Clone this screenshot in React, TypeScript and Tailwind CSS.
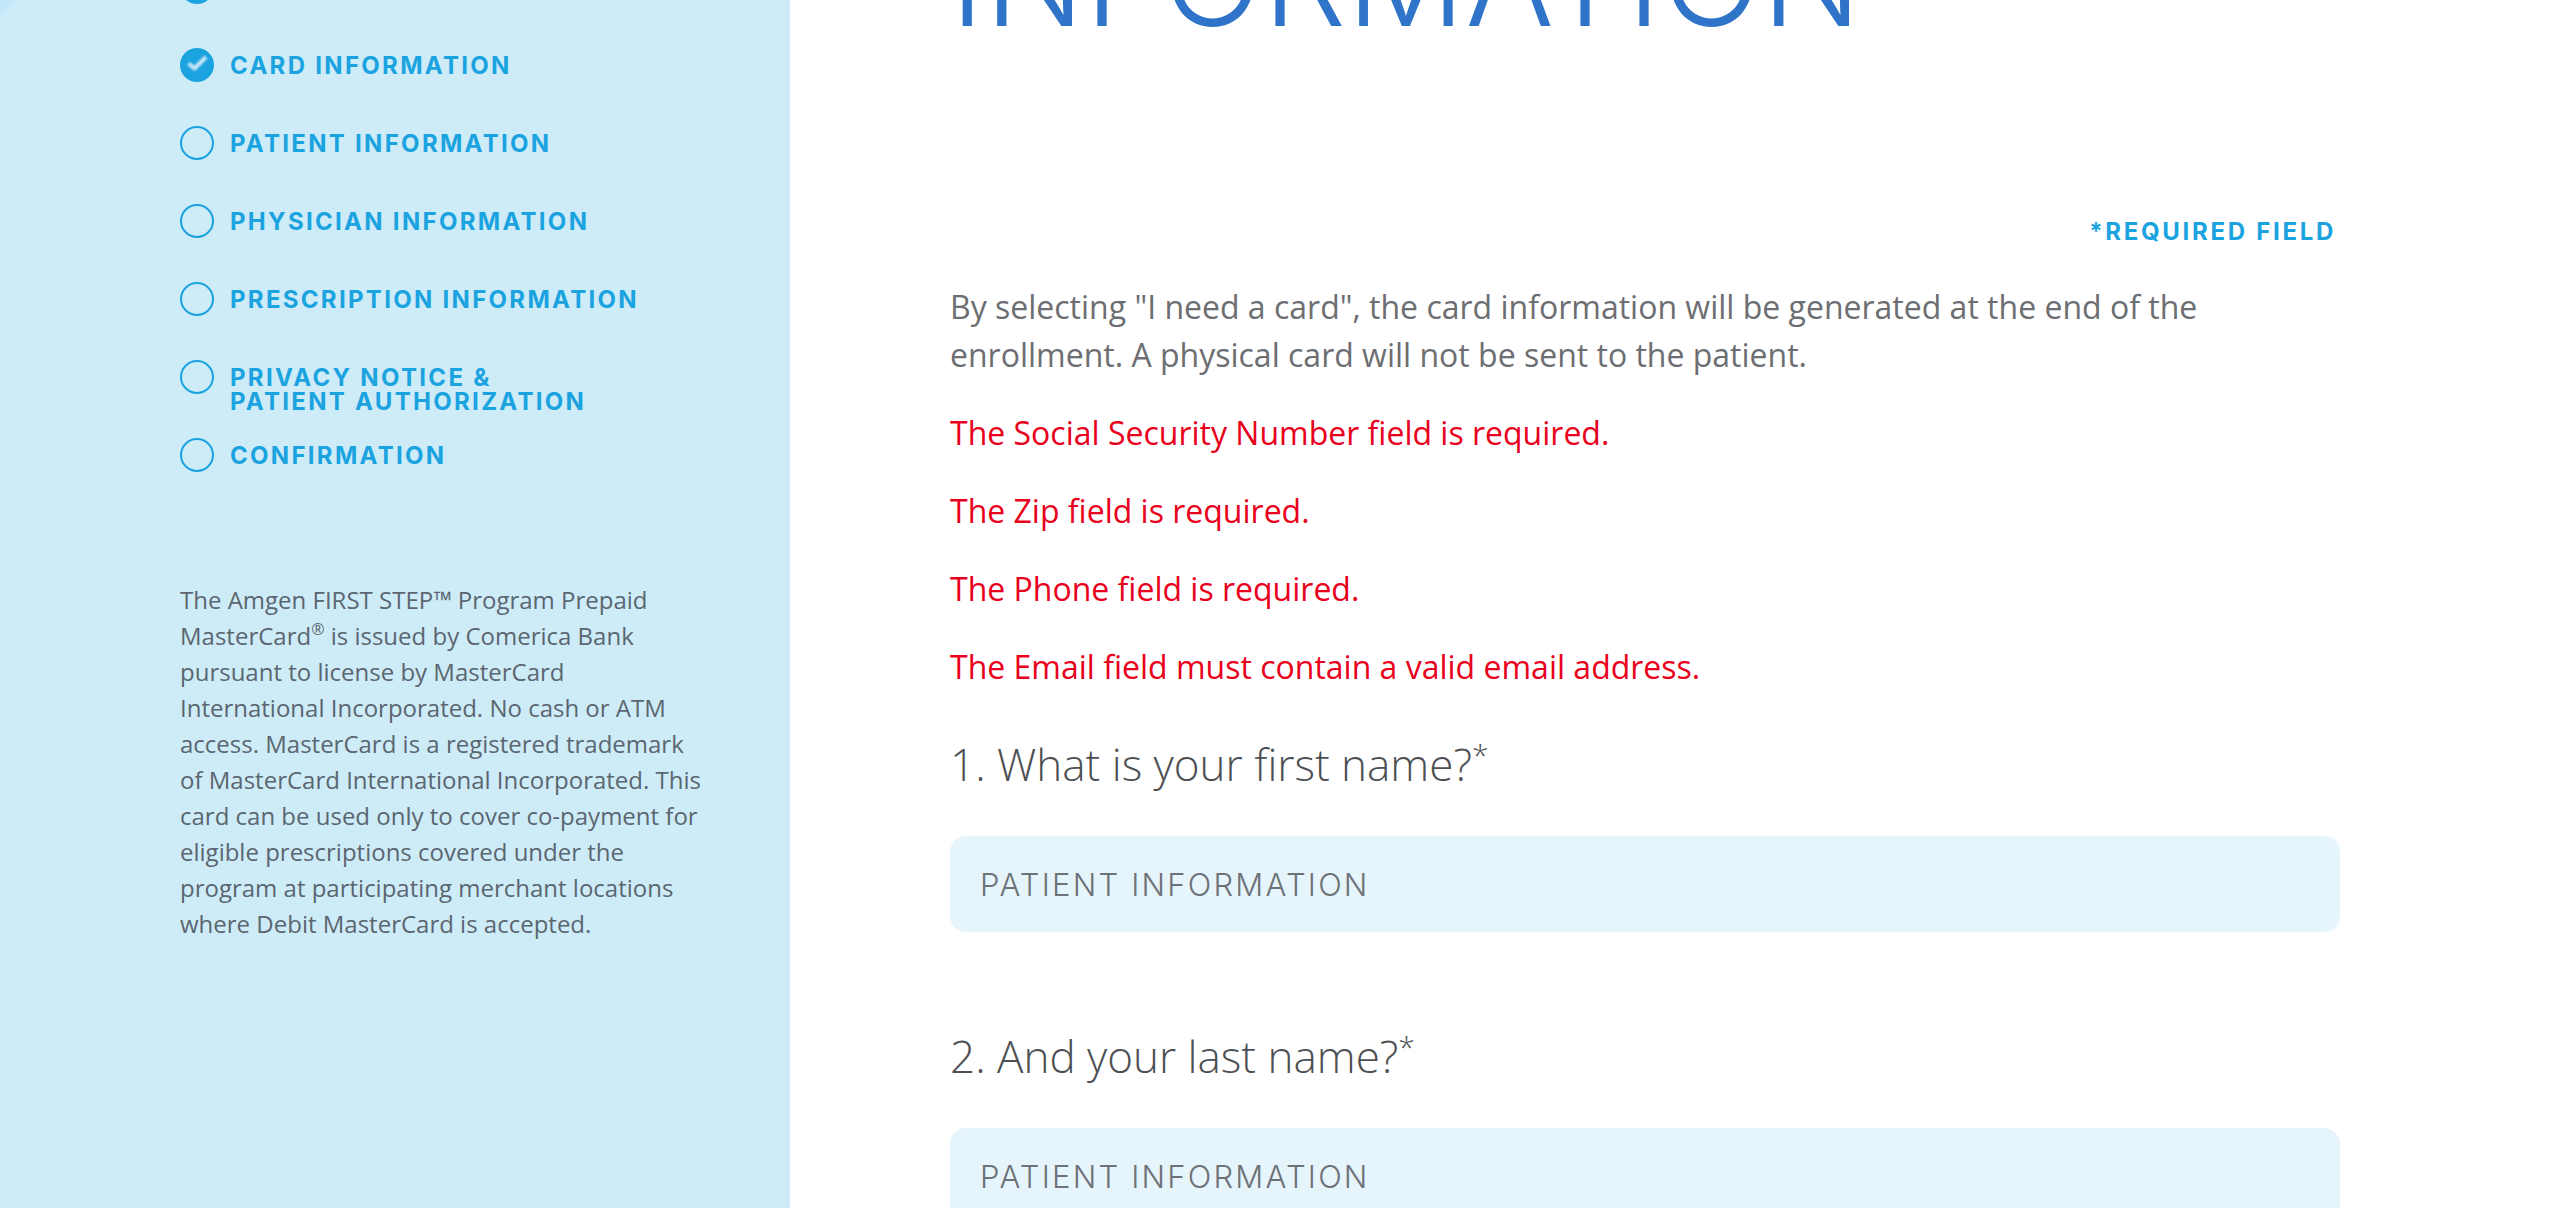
const steps = [
  { label: "CARD INFORMATION", done: true },
  { label: "PATIENT INFORMATION" },
  { label: "PHYSICIAN INFORMATION" },
  { label: "PRESCRIPTION INFORMATION" },
  { label: "PRIVACY NOTICE &", second: "PATIENT AUTHORIZATION" },
  { label: "CONFIRMATION" },
]

const errors = [
  "The Social Security Number field is required.",
  "The Zip field is required.",
  "The Phone field is required.",
  "The Email field must contain a valid email address.",
]

function StepDot({ done }: { done?: boolean }) {
  if (!done) {
    return <span className="block h-[34px] w-[34px] shrink-0 rounded-full border-2 border-[#1ba3e0]" />
  }
  return (
    <span className="flex h-[34px] w-[34px] shrink-0 items-center justify-center rounded-full bg-[#1ba3e0]">
      <svg className="-mt-[5px] blur-[0.8px]" width="24" height="18" viewBox="0 0 24 18" fill="none">
        <path d="M3.5 9.5l6 5L21 3" stroke="#cfeaf7" strokeWidth="4" strokeLinejoin="round" />
      </svg>
    </span>
  )
}

function Step({ label, second, done }: { label: string; second?: string; done?: boolean }) {
  return (
    <li className="flex h-[34px] items-start gap-4">
      <StepDot done={done} />
      <span className="whitespace-nowrap pt-[6px] font-['Inter',sans-serif] text-[24px] font-bold leading-[24px] tracking-[2.3px] text-[#1ba3e0]">
        {label}
        {second && <br />}
        {second}
      </span>
    </li>
  )
}

function Question({ num, text }: { num: number; text: string }) {
  return (
    <div>
      <h3 className="font-['Open_Sans',sans-serif] text-[44px] font-light leading-[60px] text-[#4d4f53]">
        {num}. {text}
        <sup className="text-[30px] leading-none">*</sup>
      </h3>
      <div className="mt-[42px] flex h-[96px] items-center rounded-[16px] bg-[#e6f4fb] px-[30px] pt-[3px] font-['Inter',sans-serif] text-[31px] font-light tracking-[2.2px] text-[#6d7278]">
        PATIENT INFORMATION
      </div>
    </div>
  )
}

export default function App() {
  return (
    <div className="flex h-[1208px] w-full overflow-hidden bg-white">
      <aside className="h-full w-[790px] shrink-0 bg-[#cdecf8] bg-[linear-gradient(135deg,#bfe6fb_0px,#c4e8fa_10px,#cdecf8_14px)] pl-[180px]">
        <span className="-mt-[30px] mb-[44px] block h-[34px] w-[34px] rounded-full bg-[#1ba3e0]" />
        <ul className="flex flex-col gap-[44px]">
          {steps.map((s) => (
            <Step key={s.label} {...s} />
          ))}
        </ul>
        <p className="mt-[110px] w-[528px] font-['Open_Sans',sans-serif] text-[24px] leading-[36px] text-[#5b6670]">
          The Amgen FIRST STEP™ Program Prepaid MasterCard<sup className="-top-[10px] text-[16px] leading-none">®</sup> is issued by Comerica Bank pursuant to license by MasterCard International Incorporated. No cash or ATM access. MasterCard is a registered trademark of MasterCard International Incorporated. This card can be used only to cover co-payment for eligible prescriptions covered under the program at participating merchant locations where Debit MasterCard is accepted.
        </p>
      </aside>
      <main className="w-[1550px] shrink-0 pl-[160px]">
        <h1 className="-mt-[88px] whitespace-nowrap font-['Inter',sans-serif] text-[132px] font-light leading-[132px] text-[#2f74c9]">
          INFORMATION
        </h1>
        <p className="mt-[176px] pr-[4px] text-right font-['Inter',sans-serif] text-[24px] font-bold leading-[24px] tracking-[2.7px] text-[#1ba3e0]">
          *REQUIRED FIELD
        </p>
        <p className="mt-[39px] w-[1300px] font-['Open_Sans',sans-serif] text-[32px] leading-[48px] text-[#6d6e71]">
          By selecting "I need a card", the card information will be generated at the end of the enrollment. A physical card will not be sent to the patient.
        </p>
        <div className="mt-[30px] flex flex-col gap-[30px]">
          {errors.map((e) => (
            <p key={e} className="font-['Open_Sans',sans-serif] text-[32px] leading-[48px] text-[#e8001c]">
              {e}
            </p>
          ))}
        </div>
        <div className="mt-[43px] flex flex-col gap-[94px]">
          <Question num={1} text="What is your first name?" />
          <Question num={2} text="And your last name?" />
        </div>
      </main>
    </div>
  )
}
